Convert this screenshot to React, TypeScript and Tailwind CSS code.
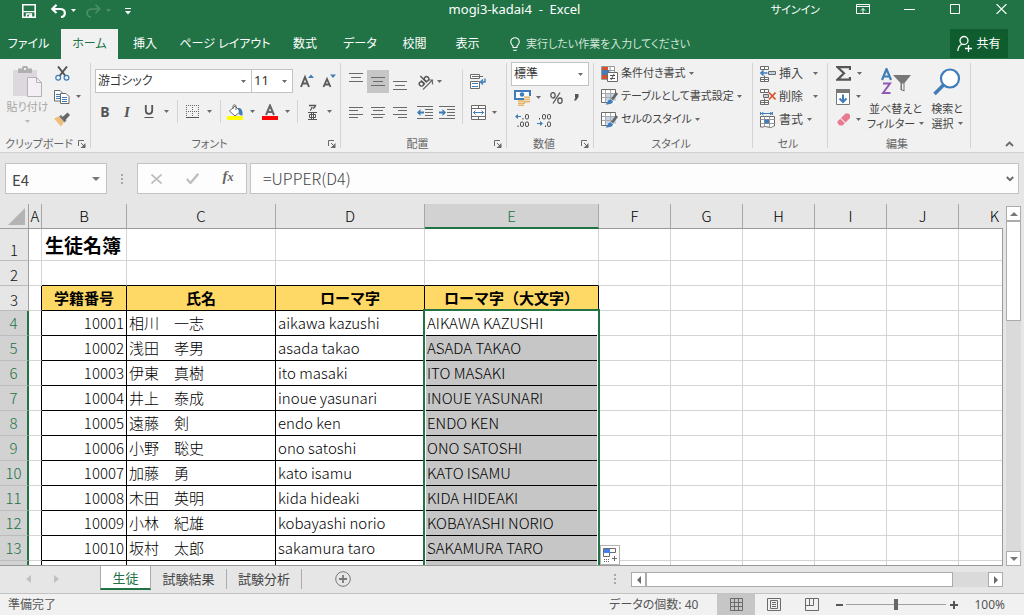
import type { ReactNode } from "react";

const INK = "#6a6a6a";
const BLUE = "#3f7cb8";

type IconProps = { w: number; h: number; children: ReactNode };

function Icon({ w, h, children }: IconProps) {
  return (
    <svg width={w} height={h} viewBox={`0 0 ${w} ${h}`} fill="none" className="block shrink-0" aria-hidden="true">
      {children}
    </svg>
  );
}

function Caret({ color = "#6a6a6a" }: { color?: string }) {
  return (
    <Icon w={5} h={3}>
      <path d="M0 0h5L2.5 3z" fill={color} />
    </Icon>
  );
}

function IconButton({ label, className = "w-[22px]", children }: { label: string; className?: string; children: ReactNode }) {
  return (
    <button type="button" aria-label={label} className={`flex h-[23px] shrink-0 items-center justify-center ${className}`}>
      {children}
    </button>
  );
}

function CaretButton({ label, className = "w-[6px]" }: { label: string; className?: string }) {
  return (
    <IconButton label={label} className={className}>
      <Caret />
    </IconButton>
  );
}

function Launcher() {
  return (
    <Icon w={8} h={8}>
      <path d="M.5 6V.5H6M3 3l3.5 3.5" stroke={INK} />
      <path d="M7.5 3v5h-5z" fill={INK} />
    </Icon>
  );
}

function Group({ name, width, launcher = false, children }: { name: string; width: string; launcher?: boolean; children: ReactNode }) {
  return (
    <>
      <section className={`flex shrink-0 flex-col ${width}`}>
        <div className="h-[76px]">{children}</div>
        <div className="flex h-[17px] items-center pr-1">
          <h2 className="flex-1 text-center text-[11px] leading-[16px] text-[#666]">{name}</h2>
          {launcher && (
            <button type="button" aria-label={`${name}の設定`}>
              <Launcher />
            </button>
          )}
        </div>
      </section>
      <span className="mt-1 h-[85px] w-px shrink-0 bg-[#d4d4d4]" />
    </>
  );
}

function Lines({ rows }: { rows: [number, number][] }) {
  return (
    <Icon w={14} h={rows.length === 3 ? 9 : 11}>
      {rows.map(([x, width], i) => (
        <rect key={i} x={x} y={rows.length === 3 ? i * 4 : Math.round(i * 3.3)} width={width} height="1" fill={INK} />
      ))}
    </Icon>
  );
}

function TitleBar() {
  return (
    <header className="flex h-[29px] shrink-0 bg-[#217346] text-white">
      <div className="flex flex-1 items-start pl-[22px] pt-1">
        <button type="button" aria-label="上書き保存">
          <Icon w={14} h={14}>
            <path d="M.8.8h12.4v12.4H.8z" stroke="#fff" strokeWidth="1.6" />
            <path d="M1 7.6h12M4.5 13.5V10h5v3.5" stroke="#fff" strokeWidth="1.4" />
            <path d="M7 11h2.5v2.5H7z" fill="#fff" />
          </Icon>
        </button>
        <button type="button" aria-label="元に戻す" className="ml-[15px]">
          <Icon w={15} h={14}>
            <path d="M5.5.8 1.3 5l4.2 4M1.5 5H9c6.500 0 6 7.500 1 8.200" stroke="#fff" strokeWidth="2.2" />
          </Icon>
        </button>
        <button type="button" aria-label="元に戻す履歴" className="ml-[5px] pt-[5px]">
          <Caret color="#fff" />
        </button>
        <button type="button" aria-label="やり直し" className="ml-[10px]">
          <Icon w={15} h={14}>
            <path d="M9.500.8 13.700 5l-4.200 4M13.500 5H6C-.5 5 0 12.500 5 13.200" stroke="#4d8f6b" strokeWidth="1.600" />
          </Icon>
        </button>
        <button type="button" aria-label="やり直し履歴" className="ml-[5px] pt-[5px]">
          <Caret color="#4d8f6b" />
        </button>
        <button type="button" aria-label="クイック アクセスのカスタマイズ" className="ml-[14px] pt-1">
          <Icon w={6} h={7}>
            <path d="M0 .5h6" stroke="#fff" />
            <path d="M0 3h6L3 6.500z" fill="#fff" />
          </Icon>
        </button>
      </div>
      <h1 className="whitespace-pre text-[13px] leading-[19px]">mogi3-kadai4  -  Excel</h1>
      <div className="flex flex-1 items-start justify-end pr-[17px]">
        <button type="button" className="text-[11px] leading-[19px]">サインイン</button>
        <button type="button" aria-label="リボンの表示オプション" className="ml-9 pt-1">
          <Icon w={14} h={10}>
            <path d="M.5.5h13v9H.5zM.5 2.500h13M7 9V4.500M5 6.500l2-2 2 2" stroke="#fff" />
          </Icon>
        </button>
        <button type="button" aria-label="最小化" className="ml-[34px] pt-[9px]">
          <Icon w={11} h={1}>
            <path d="M0 .5h11" stroke="#fff" />
          </Icon>
        </button>
        <button type="button" aria-label="最大化" className="ml-[35px] pt-1">
          <Icon w={10} h={10}>
            <path d="M.5.5h9v9h-9z" stroke="#fff" />
          </Icon>
        </button>
        <button type="button" aria-label="閉じる" className="ml-9 pt-1">
          <Icon w={11} h={10}>
            <path d="m.5 0 10 10m0-10-10 10" stroke="#fff" strokeWidth="1.100" />
          </Icon>
        </button>
      </div>
    </header>
  );
}

const ribbonTabs: { name: string; width: string }[] = [
  { name: "挿入", width: "w-[54px]" },
  { name: "ページ レイアウト", width: "w-[106px]" },
  { name: "数式", width: "w-[54px]" },
  { name: "データ", width: "w-[56px]" },
  { name: "校閲", width: "w-[53px]" },
  { name: "表示", width: "w-[53px]" },
];

function RibbonTabs() {
  return (
    <nav className="flex h-[30px] shrink-0 whitespace-nowrap bg-[#217346] text-xs text-white">
      <button type="button" className="w-[57px]">ファイル</button>
      <button type="button" className="ml-1 w-[57px] bg-[#f1f1f1] text-[#217346]">ホーム</button>
      {ribbonTabs.map((tab) => (
        <button key={tab.name} type="button" className={tab.width}>
          {tab.name}
        </button>
      ))}
      <button type="button" className="ml-4 flex items-center gap-[6px] text-[11px] text-[#d3e5da]">
        <Icon w={10} h={14}>
          <path d="M3 10.500V9C-.5 6.500.2.700 5 .700S10.500 6.500 7 9v1.500zM3.200 13.300h3.600" stroke="#fff" strokeWidth="1.100" />
        </Icon>
        実行したい作業を入力してください
      </button>
      <button type="button" className="mb-px ml-auto mr-4 flex w-[58px] items-center justify-center gap-1 bg-[#0f5c2f]">
        <Icon w={15} h={17}>
          <circle cx="7" cy="5.500" r="4" stroke="#fff" strokeWidth="1.300" />
          <path d="M.8 16c.2-4 2-6 4.500-7M8 13.500h7M11.500 10v7" stroke="#fff" strokeWidth="1.300" />
        </Icon>
        共有
      </button>
    </nav>
  );
}

function ClipboardGroup() {
  return (
    <Group name="クリップボード" width="w-[90px]" launcher>
      <div className="flex">
        <button type="button" className="flex w-[50px] flex-col items-center pl-[5px] pt-[7px] text-[11px] text-[#a6a6a6]">
          <Icon w={29} h={31}>
            <path d="M0 4h24v8h-9v18H0z" fill="#ddd8dd" />
            <path d="M5 2.500h4a3 3 0 0 1 6 0h4V7H5z" fill="#b0b0b0" />
            <path d="M11 2h2v2h-2z" fill="#f1f1f1" />
            <path d="M14.500 11.500h9l5 5v14h-14z" fill="#f4eff5" stroke="#b3b3b3" />
            <path d="M23.500 11.500v5h5" stroke="#b3b3b3" />
          </Icon>
          <span className="mt-px whitespace-nowrap leading-[18px]">貼り付け</span>
          <span className="mt-1">
            <Caret color="#b8b8b8" />
          </span>
        </button>
        <div className="ml-1 flex flex-col pt-[3px]">
          <IconButton label="切り取り" className="w-[16px]">
            <Icon w={15} h={15}>
              <path d="M3 .5 10.500 10M12 .5 4.500 10" stroke="#555" strokeWidth="2" />
              <circle cx="3.200" cy="11.800" r="2.400" stroke={BLUE} strokeWidth="1.200" />
              <circle cx="11.500" cy="11.800" r="2.400" stroke={BLUE} strokeWidth="1.200" />
            </Icon>
          </IconButton>
          <div className="flex">
            <IconButton label="コピー" className="w-[16px]">
              <Icon w={16} h={14}>
                <path d="M.5.5H6l2.500 2.500v8h-8z" fill="#fff" stroke={INK} />
                <path d="M2 4.500h4M2 6.500h4M2 8.500h4" stroke={BLUE} />
                <path d="M6.500 3.500H12l3 3v7H6.500z" fill="#fff" stroke={INK} />
                <path d="M8 7.500h5M8 9.500h5M8 11.500h5" stroke={BLUE} />
              </Icon>
            </IconButton>
            <CaretButton label="コピーのオプション" className="w-[17px]" />
          </div>
          <IconButton label="書式のコピー" className="w-[16px]">
            <Icon w={16} h={15}>
              <path d="m0 6.500 4.500-2L10 10l-3 4.500z" fill="#f0bd76" />
              <path d="m5 4.500 2-1.500 5.500 5.500-2 2z" fill="#777" />
              <path d="m8 5.500 5.500-5 2.500 2.500-5 5.500z" fill="#666" />
            </Icon>
          </IconButton>
        </div>
      </div>
    </Group>
  );
}

function SelectBox({ label, value, className, textSize = "text-xs" }: { label: string; value: string; className: string; textSize?: string }) {
  return (
    <div className={`grid h-[24px] items-center border border-[#c3c3c3] bg-white ${className}`}>
      <select
        aria-label={label}
        defaultValue={value}
        className={`col-start-1 row-start-1 h-full w-full appearance-none bg-transparent pl-[2px] text-[#333] outline-none ${textSize}`}
      >
        <option>{value}</option>
      </select>
      <span className="pointer-events-none col-start-1 row-start-1 justify-self-end pr-[5px]">
        <Caret />
      </span>
    </div>
  );
}

function Divider() {
  return <span className="h-[23px] w-px shrink-0 bg-[#d4d4d4]" />;
}

function FontGroup() {
  return (
    <Group name="フォント" width="w-[249px]" launcher>
      <div className="flex pl-1 pt-[10px]">
        <SelectBox label="フォント名" value="游ゴシック" className="w-[157px]" />
        <SelectBox label="フォント サイズ" value="11" className="w-[41px] border-l-0" textSize="text-[13px]" />
        <IconButton label="フォント サイズの拡大" className="ml-[3px] w-[22px]">
          <Icon w={14} h={14}>
            <path d="m1 13 4-10 4 10M2.500 9.500h5" stroke="#5a5a5a" strokeWidth="1.900" />
            <path d="M8 4h6l-3-3.500z" fill={BLUE} />
          </Icon>
        </IconButton>
        <IconButton label="フォント サイズの縮小" className="w-[22px]">
          <Icon w={14} h={14}>
            <path d="m1.500 13 3.500-8 3.500 8M3 10.500h4" stroke="#5a5a5a" strokeWidth="1.800" />
            <path d="M8 .5h6L11 4z" fill={BLUE} />
          </Icon>
        </IconButton>
      </div>
      <div className="flex items-center pl-[3px] pt-[7px] text-[15px] leading-[20px] text-[#555]">
        <IconButton label="太字">
          <b className="font-['Noto_Sans'] text-sm">B</b>
        </IconButton>
        <IconButton label="斜体">
          <i className="font-['Liberation_Serif'] text-[15px] font-bold">I</i>
        </IconButton>
        <IconButton label="下線">
          <Icon w={10} h={13}>
            <path d="M1.800 0v5.500c0 4.500 6.400 4.500 6.400 0V0" stroke="#555" strokeWidth="1.800" />
            <path d="M.5 12.500h9" stroke="#555" />
          </Icon>
        </IconButton>
        <CaretButton label="下線のオプション" className="mr-[5px] w-[12px]" />
        <Divider />
        <IconButton label="罫線" className="w-[28px]">
          <Icon w={13} h={13}>
            <path d="M.5 0v12M6.500 0v12M12.500 0v12M0 .5h13M0 6.500h13" stroke={INK} strokeDasharray="1 1" />
            <path d="M0 12.500h13" stroke="#555" />
          </Icon>
        </IconButton>
        <CaretButton label="罫線のオプション" className="mr-2 w-[6px]" />
        <Divider />
        <IconButton label="塗りつぶしの色" className="w-[28px]">
          <Icon w={16} h={16}>
            <path d="m8 2 5.500 5.500L8 12 2.500 7z" fill="#fff" stroke={INK} />
            <path d="M6 5V2.500C6 0 9 .2 9 2.500V6" stroke={INK} />
            <path d="M11 4c3-.5 5 2 4.500 7.500l-3-.5z" fill={BLUE} />
            <path d="M0 12h16v4H0z" fill="#ff0" />
          </Icon>
        </IconButton>
        <CaretButton label="塗りつぶしのオプション" className="w-[7px]" />
        <IconButton label="フォントの色" className="w-[28px]">
          <Icon w={16} h={16}>
            <path d="M4 11 8 1.500 12 11M5.500 8h5" stroke="#666" strokeWidth="2" />
            <path d="M0 12h16v4H0z" fill="#f00" />
          </Icon>
        </IconButton>
        <CaretButton label="フォントの色のオプション" className="mr-[7px] w-[6px]" />
        <Divider />
        <IconButton label="ふりがな" className="w-[28px]">
          <Icon w={9} h={16}>
            <path d="M1 1.500h6.500c-.5 2-1.500 2.500-2.500 3M4 3c0 2-1 3-2 3.500" stroke="#555" strokeWidth="1.300" />
            <path d="M0 8.500h9M0 15.500h9M1.500 10.500h6v3h-6zM3.500 8.500v7M5.500 8.500v7" stroke="#555" />
          </Icon>
        </IconButton>
        <CaretButton label="ふりがなのオプション" />
      </div>
    </Group>
  );
}

function IndentIcon({ flip = false }: { flip?: boolean }) {
  return (
    <Icon w={16} h={13}>
      <path d="M0 .5h16M8 3.500h8M8 6.500h8M8 9.500h8M0 12.500h16" stroke={INK} />
      {flip ? (
        <path d="M0 5.500h3.500V3L7 6.500 3.500 10V7.500H0z" fill={BLUE} />
      ) : (
        <path d="M7 5.500H3.500V3L0 6.500 3.500 10V7.500H7z" fill={BLUE} />
      )}
    </Icon>
  );
}

function AlignGroup() {
  return (
    <Group name="配置" width="w-[165px]" launcher>
      <div className="flex pl-1 pt-[11px]">
        <div>
          <div className="flex">
            <IconButton label="上揃え" className="w-[22px] pb-[9px]">
              <Lines rows={[[0, 14], [2, 10], [0, 14]]} />
            </IconButton>
            <IconButton label="上下中央揃え" className="w-[22px] bg-[#c6c6c6]">
              <Lines rows={[[0, 14], [2, 10], [0, 14]]} />
            </IconButton>
            <IconButton label="下揃え" className="w-[22px] pt-[7px]">
              <Lines rows={[[0, 14], [2, 10], [0, 14]]} />
            </IconButton>
            <IconButton label="方向" className="ml-[3px] w-[22px]">
              <Icon w={17} h={16}>
                <g transform="rotate(-45 6 7)" stroke="#555" strokeWidth="1.400">
                  <ellipse cx="2.800" cy="8" rx="2.100" ry="2.300" />
                  <path d="M5 5.200v5.500M7.700 1.500v9.200" />
                  <ellipse cx="10" cy="8" rx="2.200" ry="2.300" />
                </g>
                <path d="m6 15.500 9-9M11 6h4.500v4.500" stroke={INK} strokeWidth="1.200" />
              </Icon>
            </IconButton>
            <CaretButton label="方向のオプション" />
          </div>
          <div className="flex pt-2">
            <IconButton label="左揃え">
              <Lines rows={[[0, 14], [0, 9], [0, 14], [0, 9]]} />
            </IconButton>
            <IconButton label="中央揃え">
              <Lines rows={[[0, 14], [2, 10], [0, 14], [2, 10]]} />
            </IconButton>
            <IconButton label="右揃え">
              <Lines rows={[[0, 14], [5, 9], [0, 14], [5, 9]]} />
            </IconButton>
            <IconButton label="インデントを減らす" className="ml-[3px] w-[22px]">
              <IndentIcon />
            </IconButton>
            <IconButton label="インデントを増やす">
              <IndentIcon flip />
            </IconButton>
          </div>
        </div>
        <span className="ml-1 h-[54px] w-px bg-[#d4d4d4]" />
        <div className="ml-1">
          <IconButton label="折り返して全体を表示する">
            <Icon w={16} h={15}>
              <path d="M.5.500h9v4h-9zM.5 7.500h9v7h-9z" fill="#fff" stroke={INK} />
              <path d="M2 9.500h6M2 12.500h6" stroke={BLUE} />
              <path d="M2 2.500h11" stroke={INK} />
              <path d="M15 4.500V8h-4.500M13 5.500 10.500 8l2.500 2.500" stroke={BLUE} strokeWidth="1.400" />
            </Icon>
          </IconButton>
          <div className="flex pt-2">
            <IconButton label="セルを結合して中央揃え">
              <Icon w={15} h={15}>
                <path d="M.5.5h14v14H.5zM.5 3.500h14M.5 11.500h14M7.500 0v3.500M7.500 11.500V15" fill="#fff" stroke={INK} />
                <path d="M2.500 7.500h10M4.500 5.500l-2 2 2 2M10.500 5.500l2 2-2 2" stroke={BLUE} />
              </Icon>
            </IconButton>
            <CaretButton label="結合のオプション" className="w-[10px]" />
          </div>
        </div>
      </div>
    </Group>
  );
}

function DecimalIcon({ increase = false }: { increase?: boolean }) {
  const arrow = increase ? "M6 2H3V0L0 2.500 3 5V3h3z" : "M0 9h3V7l3 2.500L3 12v-2H0z";
  return (
    <Icon w={15} h={13}>
      <path d={arrow} fill={BLUE} />
      {increase ? (
        <g stroke="#444">
          <path d="M8 4v1.500M3 11.500V13" />
          <rect x="10.500" y=".5" width="3" height="4.500" rx="1.300" />
          <rect x="5.500" y="8" width="3" height="4.500" rx="1.300" />
          <rect x="10.500" y="8" width="3" height="4.500" rx="1.300" />
        </g>
      ) : (
        <g stroke="#444">
          <path d="M2.500 4v1.500M8.500 11.500V13" />
          <rect x="5.500" y=".5" width="3" height="4.500" rx="1.300" />
          <rect x="10.500" y=".5" width="3" height="4.500" rx="1.300" />
          <rect x="10.500" y="8" width="3" height="4.500" rx="1.300" />
        </g>
      )}
    </Icon>
  );
}

function NumberGroup() {
  return (
    <Group name="数値" width="w-[86px]" launcher>
      <div className="px-1 pt-[3px]">
        <SelectBox label="表示形式" value="標準" className="w-[78px]" />
        <div className="flex items-center">
          <IconButton label="通貨表示形式" className="w-[22px]">
            <Icon w={17} h={16}>
              <path d="M1 1h15v8H1z" fill="#fff" stroke={BLUE} strokeWidth="2" />
              <circle cx="8" cy="4.500" r="2.200" fill={BLUE} />
              <path d="M10 6h7v5h-7z" fill="#f1f1f1" />
              <path d="M4 10h6v6H4z" fill="#f1f1f1" />
              <path d="M10 7.300h6M10 9.500h6M10 11.700h6M4 11h6M4 13.200h7M4 15.300h6" stroke="#e6b566" strokeWidth="1.500" />
            </Icon>
          </IconButton>
          <CaretButton label="通貨のオプション" className="w-[10px]" />
          <IconButton label="パーセント スタイル" className="w-[26px]">
            <Icon w={13} h={12}>
              <path d="M10 .5 3 11.500" stroke="#555" strokeWidth="1.300" />
              <ellipse cx="3" cy="3.300" rx="2.200" ry="2.700" stroke="#555" strokeWidth="1.300" />
              <ellipse cx="10" cy="8.700" rx="2.200" ry="2.700" stroke="#555" strokeWidth="1.300" />
            </Icon>
          </IconButton>
          <IconButton label="桁区切りスタイル" className="w-[14px]">
            <Icon w={5} h={7}>
              <path d="M1 0h3.500v3L2 6.500H0L1.500 3.500H1z" fill="#555" />
            </Icon>
          </IconButton>
        </div>
        <div className="flex">
          <IconButton label="小数点以下の表示桁数を増やす">
            <DecimalIcon increase />
          </IconButton>
          <IconButton label="小数点以下の表示桁数を減らす">
            <DecimalIcon />
          </IconButton>
        </div>
      </div>
    </Group>
  );
}

function RibbonRow({ icon, text, caret = "ml-[3px]", textSize = "text-xs" }: { icon: ReactNode; text: string; caret?: string; textSize?: string }) {
  return (
    <button type="button" className={`flex h-[23px] items-center whitespace-nowrap text-[#444] ${textSize}`}>
      {icon}
      <span className="ml-[3px]">{text}</span>
      <span className={caret}>
        <Caret />
      </span>
    </button>
  );
}

function BrushGridIcon() {
  return (
    <Icon w={17} h={16}>
      <path d="M.5.5h14v13H.5z" fill="#fff" />
      <path d="M5 4h10v8H5z" fill="#c3d3e6" />
      <path d="M.5 4.500h14M.5 8.500h10M4.500.500v13M9.500.500v10" stroke="#aaa" />
      <path d="M6 13.500H.500V.500h14V5" stroke={INK} />
      <path d="M16 4 11 10.500" stroke="#666" strokeWidth="2.800" />
      <path d="M4.500 15.500C6.500 14.500 6 11 9.500 10.500l2.500 2c-.5 2-2.500 3-7.500 3z" fill={BLUE} />
    </Icon>
  );
}

function StyleGroup() {
  return (
    <Group name="スタイル" width="w-[158px]">
      <div className="flex flex-col items-start pl-[7px] pt-[3px]">
        <RibbonRow
          text="条件付き書式"
          textSize="text-[11px]"
          icon={
            <Icon w={17} h={16}>
              <path d="M.5.5h13v13H.5zM4.500.5v13M.5 4.500h13M.5 9h13M9 .5v13" fill="#fff" stroke="#999" />
              <path d="M1 1h6v3H1zM1 9h5v4H1z" fill="#d8512b" />
              <path d="M1 4h7v5H1z" fill={BLUE} />
              <path d="M6.500 6.500h10v9h-10z" fill="#fff" stroke={INK} />
              <path d="M9 9.500h5M9 12.500h5M13 8l-3 6" stroke="#555" />
            </Icon>
          }
        />
        <RibbonRow text="テーブルとして書式設定" textSize="text-[11px]" icon={<BrushGridIcon />} />
        <RibbonRow text="セルのスタイル" textSize="text-[11px]" icon={<BrushGridIcon />} />
      </div>
    </Group>
  );
}

function CellGroup() {
  return (
    <Group name="セル" width="w-[74px]">
      <div className="flex flex-col items-start pl-[7px] pt-[3px]">
        <RibbonRow
          text="挿入"
          caret="ml-[10px]"
          icon={
            <Icon w={16} h={16}>
              <path d="M.5.500h8v3h-8zM4.500.500v3M.5 11.500h8v4h-8zM4.500 9.500v6M.5 13.500h8" fill="#fff" stroke={INK} />
              <path d="M8.500 5.500h7v3h-7z" fill="#c3d3e6" stroke={INK} />
              <path d="M7.500 7H1M3.500 4.500 1 7l2.500 2.500" stroke={BLUE} strokeWidth="1.600" />
            </Icon>
          }
        />
        <RibbonRow
          text="削除"
          caret="ml-[10px]"
          icon={
            <Icon w={16} h={16}>
              <path d="M.5.500h8v3h-8zM4.500.500v3M.5 11.500h8v4h-8zM4.500 9.500v6M.5 13.500h8" fill="#fff" stroke={INK} />
              <path d="M3.500 5.500h5v3h-5z" fill="#c3d3e6" stroke={INK} />
              <path d="m9 3.500 6.500 7m0-7L9 10.500" stroke="#d8512b" strokeWidth="1.600" />
            </Icon>
          }
        />
        <RibbonRow
          text="書式"
          caret="ml-1"
          icon={
            <Icon w={16} h={16}>
              <path d="M.5 0v3M12.500 0v3M1 1.500h11.500M3.500 0 1.500 1.500l2 1.500M10 0l2 1.500L10 3" stroke={BLUE} />
              <path d="M.5 4.500h14v9.500c-2 0-2 1.500-4 1.500s-3-1-5-1-3 1-5 .500z" fill="#fff" stroke={INK} />
              <path d="M.5 7.500h14M.5 11.500h14M4.500 4.500v10M9.500 4.500v11" stroke="#999" />
              <path d="M4.500 7.500H9v4H4.500z" fill={BLUE} />
            </Icon>
          }
        />
      </div>
    </Group>
  );
}

function EditGroup() {
  return (
    <Group name="編集" width="w-[142px]">
      <div className="flex">
        <div className="pl-[6px] pt-[3px]">
          <div className="flex">
            <IconButton label="合計" className="w-[18px]">
              <Icon w={15} h={15}>
                <path d="M14 4V1.200H1.500L8 7.300l-6.500 6.300H14V11" stroke="#555" strokeWidth="2.200" />
              </Icon>
            </IconButton>
            <CaretButton label="合計のオプション" className="w-[14px]" />
          </div>
          <div className="flex">
            <IconButton label="フィル" className="w-[18px]">
              <Icon w={14} h={16}>
                <path d="M.5.5h13v15H.5z" fill="#fff" stroke="#777" />
                <path d="M0 0h14v4H0z" fill="#777" />
                <path d="M7 5.500v7.500M3.500 9.500 7 13l3.500-3.500" stroke={BLUE} strokeWidth="2" />
              </Icon>
            </IconButton>
            <CaretButton label="フィルのオプション" className="w-[12px]" />
          </div>
          <div className="flex">
            <IconButton label="クリア" className="w-[18px]">
              <Icon w={13} h={13}>
                <path d="M8.500.5h3L13 2v3L8.500 9.500 4 5z" fill="#e8798f" />
                <path d="m3.300 5.700 4.500 4.500L5.500 12.500h-3L.5 10V8.500z" fill="#e8798f" />
              </Icon>
            </IconButton>
            <CaretButton label="クリアのオプション" className="w-[12px]" />
          </div>
        </div>
        <button type="button" className="ml-[3px] w-[53px] whitespace-nowrap pt-2 text-[11px] leading-[15px] text-[#444]">
          <span className="flex justify-center">
            <Icon w={30} h={28}>
              <path d="m1 12 4.500-11L10 12M3 8.500h5.500" stroke={BLUE} strokeWidth="2.200" />
              <path d="M2 15.500h7L2 25h7.500" stroke="#8e5ab5" strokeWidth="2" />
              <path d="M12 7h18l-6.500 8v8.500l-4-1.500V15z" fill="#777" />
              <path d="M21 15.500h1.500v6.500L21 21.500z" fill="#f1f1f1" />
            </Icon>
          </span>
          <span className="mt-[5px] block">並べ替えと</span>
          <span className="flex items-center justify-center gap-1">フィルター<Caret /></span>
        </button>
        <button type="button" className="ml-1 w-[42px] whitespace-nowrap pt-2 text-[11px] leading-[15px] text-[#444]">
          <span className="flex justify-center">
            <Icon w={28} h={28}>
              <circle cx="17" cy="10.500" r="9" fill="#fff" stroke={BLUE} strokeWidth="2.200" />
              <path d="m10.500 17-9 9" stroke={BLUE} strokeWidth="3.500" />
            </Icon>
          </span>
          <span className="mt-[5px] block">検索と</span>
          <span className="flex items-center justify-center gap-1">選択<Caret /></span>
        </button>
      </div>
    </Group>
  );
}

function Ribbon() {
  return (
    <div className="flex h-[94px] shrink-0 overflow-hidden border-b border-[#d0d0d0] bg-[#f1f1f1]">
      <ClipboardGroup />
      <FontGroup />
      <AlignGroup />
      <NumberGroup />
      <StyleGroup />
      <CellGroup />
      <EditGroup />
      <button type="button" aria-label="リボンを折りたたむ" className="ml-auto mr-[10px] self-end pb-[5px]">
        <Icon w={9} h={6}>
          <path d="m1 5 3.500-3.500L8 5" stroke={INK} strokeWidth="1.800" />
        </Icon>
      </button>
    </div>
  );
}

function Dots() {
  return (
    <Icon w={2} h={10}>
      <path d="M0 0h2v2H0zM0 4h2v2H0zM0 8h2v2H0z" fill="#a8a8a8" />
    </Icon>
  );
}

function FormulaBar() {
  return (
    <div className="flex h-[51px] shrink-0 items-start pl-[5px] pr-[5px] pt-[10px] text-[15px] text-[#444]">
      <div className="flex h-[31px] w-[102px] items-center border border-[#c3c3c3] bg-[#fdfdfd] pr-[6px]">
        <input aria-label="名前ボックス" defaultValue="E4" className="h-full min-w-0 flex-1 bg-transparent pl-[6px] pt-[2px] text-[15px] outline-none" />
        <Icon w={8} h={4}>
          <path d="M0 0h8L4 4z" fill="#777" />
        </Icon>
      </div>
      <span className="flex h-[31px] w-[30px] items-center justify-center">
        <Dots />
      </span>
      <div className="flex h-[31px] w-[110px] border border-[#c3c3c3] bg-[#fdfdfd]">
        <IconButton label="キャンセル" className="mt-[3px] w-[36px]">
          <Icon w={11} h={10}>
            <path d="m.5.500 10 9m0-9-10 9" stroke="#bdbdbd" strokeWidth="1.700" />
          </Icon>
        </IconButton>
        <IconButton label="入力" className="mt-[3px] w-[36px]">
          <Icon w={13} h={11}>
            <path d="m.8 6 3.700 4L12.300.8" stroke="#bdbdbd" strokeWidth="2.200" />
          </Icon>
        </IconButton>
        <IconButton label="関数の挿入" className="mt-px w-[36px]">
          <span className="font-['Liberation_Serif'] text-[15px] font-bold italic leading-[20px] text-[#666]">
            f<span className="text-[12px]">x</span>
          </span>
        </IconButton>
      </div>
      <div className="ml-[3px] flex h-[31px] flex-1 items-center border border-[#c3c3c3] bg-[#fdfdfd] pr-1">
        <input aria-label="数式バー" defaultValue="=UPPER(D4)" className="h-full min-w-0 flex-1 bg-transparent pb-[2px] pl-3 text-base font-light outline-none" />
        <button type="button" aria-label="数式バーの展開">
          <Icon w={8} h={6}>
            <path d="m.8 1 3.200 3.200L7.200 1" stroke={INK} strokeWidth="2" />
          </Icon>
        </button>
      </div>
    </div>
  );
}

const columns: { name: string; width: string }[] = [
  { name: "A", width: "w-[13px]" },
  { name: "B", width: "w-[85px]" },
  { name: "C", width: "w-[149px]" },
  { name: "D", width: "w-[149px]" },
  { name: "E", width: "w-[174px]" },
  { name: "F", width: "w-[72px]" },
  { name: "G", width: "w-[72px]" },
  { name: "H", width: "w-[72px]" },
  { name: "I", width: "w-[72px]" },
  { name: "J", width: "w-[72px]" },
  { name: "K", width: "w-[72px]" },
];

const blankColumns = ["F", "G", "H", "I", "J", "K"];

const students: [string, string, string][] = [
  ["10001", "相川　一志", "aikawa kazushi"],
  ["10002", "浅田　孝男", "asada takao"],
  ["10003", "伊東　真樹", "ito masaki"],
  ["10004", "井上　泰成", "inoue yasunari"],
  ["10005", "遠藤　剣", "endo ken"],
  ["10006", "小野　聡史", "ono satoshi"],
  ["10007", "加藤　勇", "kato isamu"],
  ["10008", "木田　英明", "kida hideaki"],
  ["10009", "小林　紀雄", "kobayashi norio"],
  ["10010", "坂村　太郎", "sakamura taro"],
];

function BlankCells() {
  return (
    <>
      {blankColumns.map((name) => (
        <td key={name} className="border-b border-r border-[#d4d4d4]" />
      ))}
    </>
  );
}

function RowHeader({ n, selected = false }: { n: string; selected?: boolean }) {
  return (
    <th
      className={
        selected
          ? "border-b border-r-2 border-b-[#bcbcbc] border-r-[#217346] bg-[#d2d2d2] font-light text-[#217346]"
          : "border-b border-r border-b-[#bcbcbc] border-r-[#a0a0a0] bg-[#e6e6e6] align-bottom font-light text-[#111]"
      }
    >
      {n}
    </th>
  );
}

function StudentRow({ index, data }: { index: number; data: [string, string, string] }) {
  const [id, name, roman] = data;
  return (
    <tr className="h-[25px]">
      <RowHeader n={id ? String(index + 4) : ""} selected />
      <td className="border-b border-r border-b-[#d4d4d4] border-r-black" />
      <td className="border-b border-r border-black pr-[2px] text-right">{id}</td>
      <td className="border-b border-r border-black pl-[2px]">{name}</td>
      <td className="border-b border-r border-black pl-[2px]">{roman}</td>
      <td className={`border-b border-r border-black pl-[2px] ${index === 0 ? "relative" : "bg-[#c6c6c6]"}`}>
        {roman.toUpperCase()}
        {index === 0 && (
          <span className="pointer-events-none absolute -left-[2px] -right-[2px] -top-[2px] h-[1000px] border-2 border-[#217346] shadow-[inset_0_0_0_1px_white]" />
        )}
      </td>
      <BlankCells />
    </tr>
  );
}

function Sheet() {
  return (
    <div className="relative min-w-0 flex-1 overflow-hidden border-b border-[#999] bg-white">
      <table className="w-px table-fixed border-separate border-spacing-0 whitespace-nowrap text-[15px] font-light leading-[20px] text-black">
        <thead>
          <tr className="h-[25px]">
            <th className="w-[29px] border-b border-r border-[#a0a0a0] bg-[#e6e6e6]">
              <span className="flex justify-end pr-[3px]">
                <Icon w={17} h={17}>
                  <path d="M17 0v17H0z" fill="#b4b4b4" />
                </Icon>
              </span>
            </th>
            {columns.map((column) => (
              <th
                key={column.name}
                className={`font-light ${column.width} ${
                  column.name === "E"
                    ? "border-b-2 border-r border-b-[#217346] border-r-[#a8a8a8] bg-[#d2d2d2] text-[#217346]"
                    : "border-b border-r border-b-[#999] border-r-[#a8a8a8] bg-[#e6e6e6]"
                }`}
              >
                {column.name}
              </th>
            ))}
          </tr>
        </thead>
        <tbody>
          <tr className="h-[32px]">
            <RowHeader n="1" />
            <td className="border-b border-r border-[#d4d4d4]" />
            <td className="border-b border-r border-[#d4d4d4] pl-[3px] text-[19px] font-bold">生徒名簿</td>
            <td className="border-b border-r border-[#d4d4d4]" />
            <td className="border-b border-r border-[#d4d4d4]" />
            <td className="border-b border-r border-[#d4d4d4]" />
            <BlankCells />
          </tr>
          <tr className="h-[25px]">
            <RowHeader n="2" />
            <td className="border-b border-r border-[#d4d4d4]" />
            <td className="border-b border-r border-b-black border-r-[#d4d4d4]" />
            <td className="border-b border-r border-b-black border-r-[#d4d4d4]" />
            <td className="border-b border-r border-b-black border-r-[#d4d4d4]" />
            <td className="border-b border-r border-b-black border-r-[#d4d4d4]" />
            <BlankCells />
          </tr>
          <tr className="h-[25px]">
            <RowHeader n="3" />
            <td className="border-b border-r border-b-[#d4d4d4] border-r-black" />
            {["学籍番号", "氏名", "ローマ字", "ローマ字（大文字）"].map((title) => (
              <th key={title} className="border-b border-r border-black bg-[#ffd966] font-bold">
                {title}
              </th>
            ))}
            <BlankCells />
          </tr>
          {students.map((student, i) => (
            <StudentRow key={student[0]} index={i} data={student} />
          ))}
          <StudentRow index={10} data={["", "", ""]} />
        </tbody>
      </table>
      <span className="absolute bottom-0 right-0 top-[24px] w-px bg-[#999]" />
      <button type="button" aria-label="オートフィル オプション" className="absolute bottom-0 left-[600px] flex h-[20px] w-[20px] items-center justify-center border border-[#b4b4b4] bg-white">
        <Icon w={14} h={14}>
          <path d="M.5.500h12v4H.5z" fill="#fff" stroke={INK} />
          <path d="M.5 4.500h6v4h-6z" fill="#fff" stroke={INK} />
          <path d="M1 1h6v4H1z" fill="#4080f0" />
          <path d="M1 11.500h6M1 13.500h6" stroke={INK} strokeDasharray="1 1" />
          <path d="M11.500 8v5M9 10.500h5" stroke={INK} />
        </Icon>
      </button>
    </div>
  );
}

function VerticalScroll() {
  return (
    <div className="flex w-[21px] shrink-0 flex-col px-[3px] pt-[2px]">
      <button type="button" aria-label="上へスクロール" className="flex h-[15px] items-center justify-center border border-[#ababab] bg-white">
        <Icon w={8} h={4}>
          <path d="M4 0 8 4H0z" fill="#777" />
        </Icon>
      </button>
      <div className="flex-1 bg-[#dadada]">
        <div className="h-[100px] border border-[#ababab] bg-white" />
      </div>
      <button type="button" aria-label="下へスクロール" className="flex h-[15px] items-center justify-center border border-[#ababab] bg-white">
        <Icon w={8} h={4}>
          <path d="M4 4 8 0H0z" fill="#777" />
        </Icon>
      </button>
    </div>
  );
}

function SheetTabs() {
  return (
    <div className="flex h-[27px] shrink-0 items-start text-[13px] text-[#444]">
      <div className="flex h-[25px] w-[100px] items-center gap-[23px] pl-[26px]">
        <button type="button" aria-label="前のシート">
          <Icon w={5} h={8}>
            <path d="M5 0v8L0 4z" fill="#c0c0c0" />
          </Icon>
        </button>
        <button type="button" aria-label="次のシート">
          <Icon w={5} h={8}>
            <path d="M0 0v8l5-4z" fill="#c0c0c0" />
          </Icon>
        </button>
      </div>
      <button type="button" className="h-[24px] w-[51px] border-b-2 border-l border-r border-b-[#217346] border-l-[#ababab] border-r-[#ababab] bg-white pt-px leading-[20px] text-[#217346]">
        生徒
      </button>
      <button type="button" className="mt-[3px] h-[20px] w-[76px] border-r border-[#ababab] leading-[18px]">試験結果</button>
      <button type="button" className="mt-[3px] h-[20px] w-[75px] border-r border-[#ababab] leading-[18px]">試験分析</button>
      <button type="button" aria-label="新しいシート" className="ml-[33px] mt-[5px]">
        <Icon w={16} h={16}>
          <circle cx="8" cy="8" r="7.300" stroke="#777" />
          <path d="M8 4v8M4 8h8" stroke="#777" strokeWidth="1.800" />
        </Icon>
      </button>
      <span className="ml-auto mr-[15px] mt-2">
        <Dots />
      </span>
      <div className="mr-[21px] mt-[6px] flex h-[15px] w-[372px]">
        <button type="button" aria-label="左へスクロール" className="flex w-[15px] items-center justify-center border border-[#ababab] bg-white">
          <Icon w={4} h={8}>
            <path d="M4 0v8L0 4z" fill={INK} />
          </Icon>
        </button>
        <div className="flex-1 bg-[#dadada]">
          <div className="h-full w-[307px] border border-[#ababab] bg-white" />
        </div>
        <button type="button" aria-label="右へスクロール" className="flex w-[15px] items-center justify-center border border-[#ababab] bg-white">
          <Icon w={4} h={8}>
            <path d="M0 0v8l4-4z" fill={INK} />
          </Icon>
        </button>
      </div>
    </div>
  );
}

function StatusBar() {
  return (
    <footer className="flex h-[22px] shrink-0 items-center border-t border-[#c3c3c3] bg-[#f1f1f1] pl-2 pr-[19px] text-xs leading-[18px] text-[#555]">
      <span>準備完了</span>
      <span className="ml-auto">データの個数: 40</span>
      <button type="button" aria-label="標準" className="ml-[19px] flex h-full w-[38px] items-center justify-center bg-[#c6c6c6]">
        <Icon w={13} h={13}>
          <path d="M.5.500h12v12H.5zM.5 4.500h12M.5 8.500h12M4.500.500v12M8.500.500v12" stroke={INK} />
        </Icon>
      </button>
      <button type="button" aria-label="ページ レイアウト" className="flex h-full w-[38px] items-center justify-center">
        <Icon w={14} h={13}>
          <path d="M.5.500h13v12H.5zM3.500 2.500h7v8h-7zM5 4.500h4M5 6.500h4M5 8.500h4" stroke={INK} />
        </Icon>
      </button>
      <button type="button" aria-label="改ページ プレビュー" className="flex h-full w-[38px] items-center justify-center">
        <Icon w={14} h={13}>
          <path d="M.5.500h13v12H.5zM.5 7.500h8v-7M4.500.500v7" stroke={INK} />
        </Icon>
      </button>
      <button type="button" aria-label="縮小" className="ml-[5px]">
        <Icon w={7} h={8}>
          <path d="M0 4h7" stroke="#555" strokeWidth="2" />
        </Icon>
      </button>
      <input
        type="range"
        aria-label="ズーム"
        min="0"
        max="100"
        defaultValue="50"
        className="ml-[3px] h-[11px] w-[100px] appearance-none bg-[linear-gradient(#a0a0a0,#a0a0a0)] bg-[length:100%_1px] bg-center bg-no-repeat [&::-webkit-slider-thumb]:h-[11px] [&::-webkit-slider-thumb]:w-1 [&::-webkit-slider-thumb]:appearance-none [&::-webkit-slider-thumb]:bg-[#666]"
      />
      <button type="button" aria-label="拡大" className="ml-1">
        <Icon w={8} h={8}>
          <path d="M0 4h8M4 0v8" stroke="#555" strokeWidth="2" />
        </Icon>
      </button>
      <span className="ml-4">100%</span>
    </footer>
  );
}

export default function App() {
  return (
    <main className="flex h-screen w-full flex-col overflow-hidden bg-[#e6e6e6] font-['Noto_Sans','Noto_Sans_CJK_JP',sans-serif] [font-feature-settings:'palt']">
      <TitleBar />
      <RibbonTabs />
      <Ribbon />
      <div className="flex min-h-0 flex-1 flex-col font-['Noto_Sans_CJK_JP',sans-serif] [font-feature-settings:normal]">
        <FormulaBar />
        <div className="flex min-h-0 flex-1">
          <Sheet />
          <VerticalScroll />
        </div>
        <SheetTabs />
      </div>
      <StatusBar />
    </main>
  );
}
